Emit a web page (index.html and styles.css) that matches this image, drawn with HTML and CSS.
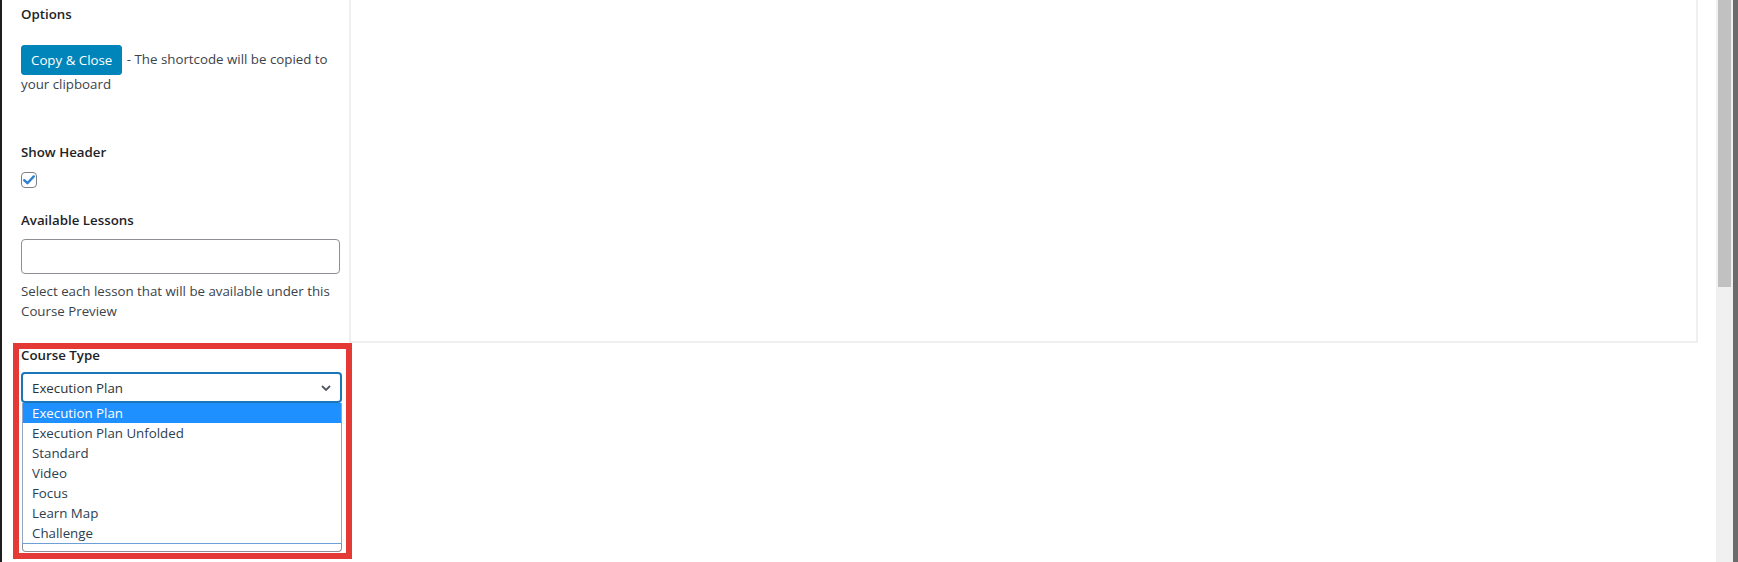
FILE: index.html
```html
<!doctype html>
<html lang="en">
  <head>
    <meta charset="UTF-8" />
    <meta name="viewport" content="width=device-width, initial-scale=1.0" />
    <title>Course Preview Shortcode</title>
    <link rel="stylesheet" href="styles.css">
  </head>
  <body>
    <div class="edge"></div>
    <div class="page">
      <aside class="sidebar">
        <div class="field-label">Options</div>
        <p class="copy-row"><button class="button-primary">Copy &amp; Close</button> <span>- The shortcode will be copied to</span><br><span>your clipboard</span></p>

        <div class="field-label show-header">Show Header</div>
        <span class="checkbox">
          <svg width="12" height="10" viewBox="0 0 12 10">
            <path d="M1.2 5.2 L4.4 8.2 L10.8 1.4" fill="none" stroke="#2f80d0" stroke-width="2.4" stroke-linecap="round" stroke-linejoin="round" />
          </svg>
        </span>

        <div class="field-label lessons">Available Lessons</div>
        <div class="text-input"></div>
        <p class="help">Select each lesson that will be available under this Course Preview</p>

        <div class="highlight">
          <div class="field-label course-type">Course Type</div>
          <div class="select">
            <span>Execution Plan</span>
            <svg class="chevron" width="10" height="6" viewBox="0 0 10 6">
              <path d="M1 1 L5 5 L9 1" fill="none" stroke="#50575e" stroke-width="1.8" />
            </svg>
          </div>
          <ul class="listbox">
            <li class="selected">Execution Plan</li>
            <li>Execution Plan Unfolded</li>
            <li>Standard</li>
            <li>Video</li>
            <li>Focus</li>
            <li>Learn Map</li>
            <li>Challenge</li>
          </ul>
          <div class="under-field"></div>
        </div>
      </aside>
      <section class="panel"></section>
    </div>
    <div class="scrollbar">
      <div class="track"><div class="thumb"></div></div>
      <div class="rail"></div>
    </div>
  </body>
</html>
```

FILE: styles.css
```css
body {
  margin: 0;
  height: 562px;
  overflow: hidden;
  display: flex;
  background-color: #fff;
  font-family: "Open Sans", "Noto Sans", sans-serif;
  font-size: 13.3px;
  color: #3c434a;
}
.edge {
  width: 2px;
  background-color: #1d1d1d;
}
.page {
  flex: 1;
  display: flex;
  align-items: flex-start;
}
.sidebar {
  width: 347px;
  box-sizing: border-box;
  padding: 4px 9px 0 19px;
}
.field-label {
  font-weight: 600;
  line-height: 20px;
  color: #1d2327;
}
.copy-row {
  margin: 23px 0 0;
  line-height: 25px;
}
.button-primary {
  display: inline-flex;
  align-items: center;
  vertical-align: middle;
  height: 30px;
  margin: -4px 1px -4px 0;
  padding: 0 9px;
  border: 1px solid #0085ba;
  border-radius: 3px;
  background-color: #0085ba;
  color: #fff;
  font-family: inherit;
  font-size: 13.3px;
  line-height: 16px;
}
.show-header {
  margin-top: 45px;
}
.checkbox {
  display: flex;
  align-items: center;
  justify-content: center;
  width: 16px;
  height: 16px;
  margin-top: 10px;
  box-sizing: border-box;
  border: 1px solid #7e8087;
  border-radius: 4px;
}
.lessons {
  margin-top: 22px;
}
.text-input {
  height: 35px;
  margin-top: 9px;
  box-sizing: border-box;
  border: 1px solid #8c8f94;
  border-radius: 4px;
}
.help {
  margin: 7px 0 0;
  line-height: 20px;
}
.highlight {
  margin: 22px -12px 0 -8px;
  padding: 0 4px 0 2px;
  border: 6px solid #e53935;
}
.course-type {
  margin-top: -2px;
  line-height: 16px;
}
.select {
  display: flex;
  align-items: center;
  justify-content: space-between;
  height: 31px;
  margin-top: 9px;
  padding: 0 9px;
  box-sizing: border-box;
  border: 2px solid #1b76b8;
  border-radius: 4px;
  color: #2c3338;
}
.listbox {
  list-style: none;
  margin: 0 0 0 1px;
  padding: 0;
  width: 320px;
  box-sizing: border-box;
  border: 1px solid #8ea6c6;
  border-top: none;
  border-bottom-color: #6f9fd8;
}
.listbox li {
  height: 20px;
  line-height: 20px;
  padding-left: 9px;
  color: #2c3e50;
}
.listbox .selected {
  background-color: #1e90ff;
  color: #fff;
}
.under-field {
  width: 320px;
  height: 8px;
  margin: 0 0 1px 1px;
  box-sizing: border-box;
  border: 1px solid #8c8f94;
  border-top: none;
  border-radius: 0 0 4px 4px;
}
.panel {
  width: 1349px;
  height: 343px;
  box-sizing: border-box;
  border: 2px solid #efefef;
  border-top: none;
}
.scrollbar {
  display: flex;
}
.track {
  width: 17px;
  background-color: #f0f0f0;
  padding: 0 2px;
  box-sizing: border-box;
}
.thumb {
  height: 287px;
  background-color: #c1c1c1;
}
.rail {
  width: 5px;
  background-color: #6b6b6b;
}
```
